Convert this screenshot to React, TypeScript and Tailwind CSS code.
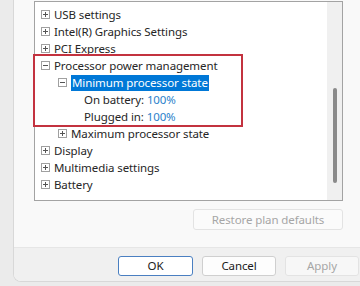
import React from "react";

type Row = {
  label: string;
  level: number;
  box?: "plus" | "minus";
  value?: string;
  selected?: boolean;
};

const rows: Row[] = [
  { label: "USB settings", level: 0, box: "plus" },
  { label: "Intel(R) Graphics Settings", level: 0, box: "plus" },
  { label: "PCI Express", level: 0, box: "plus" },
  { label: "Processor power management", level: 0, box: "minus" },
  { label: "Minimum processor state", level: 1, box: "minus", selected: true },
  { label: "On battery:", level: 2, value: "100%" },
  { label: "Plugged in:", level: 2, value: "100%" },
  { label: "Maximum processor state", level: 1, box: "plus" },
  { label: "Display", level: 0, box: "plus" },
  { label: "Multimedia settings", level: 0, box: "plus" },
  { label: "Battery", level: 0, box: "plus" },
];

function Expander({ kind }: { kind: "plus" | "minus" }) {
  return (
    <svg width="9" height="9" viewBox="0 0 9 9" className="shrink-0">
      <rect x="0.5" y="0.5" width="8" height="8" fill="#fff" stroke="#a0a0a0" />
      <path d="M2 4.5h5" stroke="#555" />
      {kind === "plus" && <path d="M4.5 2v5" stroke="#555" />}
    </svg>
  );
}

function TreeRow({ row }: { row: Row }) {
  const indent = row.level === 0 ? "pl-[6px]" : row.level === 1 ? "pl-[23px]" : "pl-[49px]";
  return (
    <div className={`flex items-center h-[17px] gap-[4px] ${indent}`}>
      {row.box && <Expander kind={row.box} />}
      <span
        className={
          row.selected
            ? "bg-[#0078d7] text-white px-[1px] leading-[16px]"
            : "text-[#262626] leading-[16px]"
        }
      >
        {row.label}
        {row.value && <span className="text-[#2a7fcb]"> {row.value}</span>}
      </span>
    </div>
  );
}

export default function App() {
  return (
    <div className="w-[360px] h-[286px] bg-[#ebebeb] overflow-hidden font-['Noto_Sans',sans-serif] text-[11.5px] tracking-[-0.1px]">
      <div className="ml-[13px] h-[282px] w-[360px] flex flex-col bg-[#f9f9f9] border-l border-b border-[#d8d8d8] rounded-bl-[8px] overflow-hidden">
        <div className="pl-[20px] pt-[1px]">
          <div className="w-[309px] h-[200px] border border-[#a3a3a3] bg-white flex">
            <div className="flex-1 pt-[4px] relative">
              {rows.map((r) => (
                <TreeRow key={r.label} row={r} />
              ))}
              <div className="absolute left-[-2px] top-[52px] w-[210px] h-[73px] border-2 border-[#c3323f]" />
            </div>
            <div className="w-[15px] bg-[#f0f0f0] flex justify-center pt-[86px]">
              <div className="w-[4px] h-[95px] bg-[#8a8a8a] rounded-[2px]" />
            </div>
          </div>
          <div className="w-[309px] flex justify-end mt-[8px]">
            <div className="w-[150px] h-[21px] border border-[#e3e3e3] rounded-[3px] bg-[#fbfbfb] text-[#a6a6a6] flex items-center justify-center">
              Restore plan defaults
            </div>
          </div>
        </div>
        <div className="mt-auto h-[34px] bg-[#f0f0f0] border-t border-[#e6e6e6] flex gap-[9px] pl-[104px] pt-[8px]">
          <div className="w-[75px] h-[20px] border border-[#4a7fc1] rounded-[3px] bg-white text-[#1a1a1a] flex items-center justify-center">
            OK
          </div>
          <div className="w-[74px] h-[20px] border border-[#cfcfcf] rounded-[3px] bg-[#fdfdfd] text-[#1a1a1a] flex items-center justify-center">
            Cancel
          </div>
          <div className="w-[74px] h-[20px] border border-[#e3e3e3] rounded-[3px] bg-[#f7f7f7] text-[#a6a6a6] flex items-center justify-center">
            Apply
          </div>
        </div>
      </div>
    </div>
  );
}
